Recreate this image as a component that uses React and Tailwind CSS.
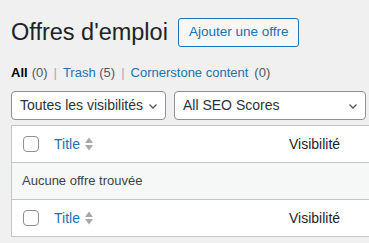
import React from 'react'

const font = { fontFamily: '"Liberation Sans", Arial, sans-serif' }

function SortIcon() {
  return (
    <svg width="10" height="16" viewBox="0 0 10 16" className="ml-[4px]">
      <path d="M5 1.5 L9 7 L1 7 Z" fill="#a7aaad" />
      <path d="M1 9 L9 9 L5 14.5 Z" fill="#a7aaad" />
    </svg>
  )
}

function Chevron() {
  return (
    <svg width="12" height="12" viewBox="0 0 12 12" fill="none" stroke="#50575e" strokeWidth="1.3">
      <path d="M2.5 4.5 L6 8 L9.5 4.5" />
    </svg>
  )
}

function Checkbox() {
  return <span className="block w-4 h-4 rounded-[4px] border border-[#8c8f94] bg-white" />
}

function HeadRow({ bottom }) {
  return (
    <div className={`flex items-center h-[37px] bg-white ${bottom ? 'border-t border-[#c3c4c7]' : 'border-b border-[#c3c4c7]'}`}>
      <div className="w-[42px] pl-[11px]">
        <Checkbox />
      </div>
      <div className="w-[235px] flex items-center text-[14px] text-[#2271b1]">
        Title
        <SortIcon />
      </div>
      <div className="text-[14px] text-[#1d2327]">Visibilité</div>
    </div>
  )
}

export default function App() {
  return (
    <div className="w-[369px] h-[243px] bg-[#f0f0f1] overflow-hidden text-[#3c434a]" style={font}>
      <div className="pl-[11px] pt-[18px]">
        <div className="flex items-center">
          <h1 className="text-[23.5px] leading-[29px] text-[#1d2327] font-normal">Offres d'emploi</h1>
          <button className="ml-[10px] h-[29px] px-[10px] border border-[#2271b1] rounded-[3px] bg-[#f6f7f7] text-[13.5px] text-[#2271b1]">
            Ajouter une offre
          </button>
        </div>
        <div className="mt-[17px] flex items-center text-[13px] leading-[18px] text-[#50575e] whitespace-nowrap">
          <span className="text-[#000] font-semibold">All</span>
          <span className="ml-[4px]">(0)</span>
          <span className="mx-[6px] text-[#a7aaad]">|</span>
          <span className="text-[#2271b1]">Trash <span className="text-[#50575e]">(5)</span></span>
          <span className="mx-[6px] text-[#a7aaad]">|</span>
          <span className="text-[#2271b1]">Cornerstone content</span>
          <span className="ml-[6px]">(0)</span>
        </div>
        <div className="mt-[9px] flex gap-[8px] whitespace-nowrap">
          <div className="w-[155px] h-[29px] border border-[#8c8f94] rounded-[4px] bg-white flex items-center justify-between pl-[8px] pr-[6px] text-[14px] text-[#2c3338]">
            <span>Toutes les visibilités</span>
            <Chevron />
          </div>
          <div className="w-[192px] h-[29px] border border-[#8c8f94] rounded-[4px] bg-white flex items-center justify-between pl-[8px] pr-[6px] text-[14px] text-[#2c3338]">
            <span>All SEO Scores</span>
            <Chevron />
          </div>
        </div>
        <div className="mt-[5px] w-[400px] border border-[#c3c4c7] bg-white">
          <HeadRow />
          <div className="h-[36px] bg-[#f6f7f7] flex items-center pl-[10px] text-[13px] text-[#3c434a]">
            Aucune offre trouvée
          </div>
          <HeadRow bottom />
        </div>
      </div>
    </div>
  )
}
